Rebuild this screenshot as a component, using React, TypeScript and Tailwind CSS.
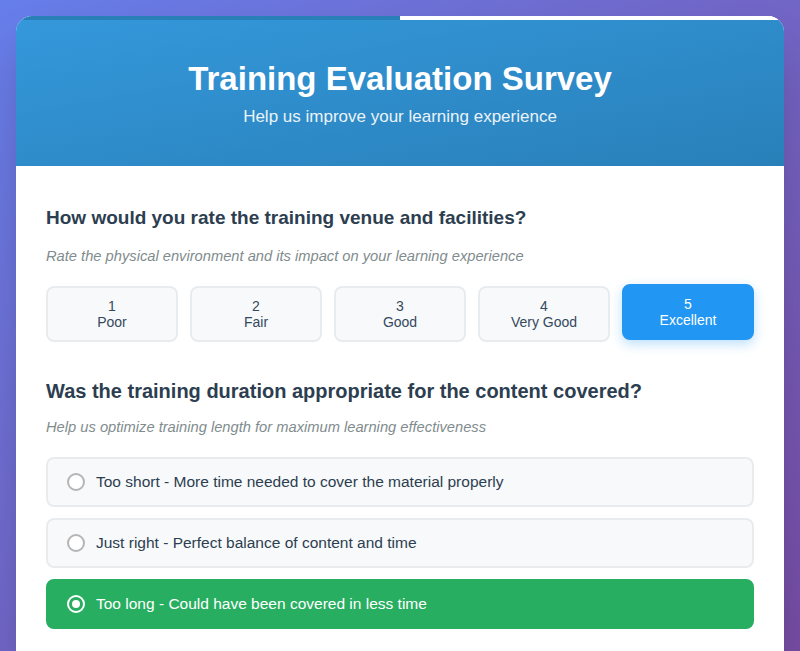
import { useState } from "react"

const ratings = [
  { value: 1, label: "Poor" },
  { value: 2, label: "Fair" },
  { value: 3, label: "Good" },
  { value: 4, label: "Very Good" },
  { value: 5, label: "Excellent" },
]

const durations = [
  "Too short - More time needed to cover the material properly",
  "Just right - Perfect balance of content and time",
  "Too long - Could have been covered in less time",
]

export default function App() {
  const [rating, setRating] = useState(5)
  const [duration, setDuration] = useState(2)

  return (
    <div className="min-h-screen bg-gradient-to-br from-[#667eea] to-[#764ba2] p-4 font-['Liberation_Sans',Arial,sans-serif]">
      <div className="mx-auto max-w-[768px] overflow-hidden rounded-2xl bg-white shadow-2xl">
        {/* progress */}
        <div className="h-1 bg-white">
          <div className="h-full w-1/2 bg-[#2980b9]" />
        </div>

        <div className="bg-gradient-to-br from-[#3498db] to-[#2980b9] px-10 pt-10 pb-10 text-center text-white">
          <h1 className="text-[33px] font-bold leading-[38px]">Training Evaluation Survey</h1>
          <p className="mt-2.5 text-[17px] leading-[18px] opacity-90">Help us improve your learning experience</p>
        </div>

        <div className="px-[30px] pt-10 pb-10">
          <div className="mb-[37px]">
            <h2 className="text-[19px] font-bold leading-[24px] text-[#2c3e50]">
              How would you rate the training venue and facilities?
            </h2>
            <p className="mt-[17px] text-[14.7px] italic leading-[18px] text-[#7f8c8d]">
              Rate the physical environment and its impact on your learning experience
            </p>
            <div className="mt-[21px] grid grid-cols-5 gap-3">
              {ratings.map((r) => {
                const active = rating === r.value
                return (
                  <button
                    key={r.value}
                    onClick={() => setRating(r.value)}
                    className={
                      active
                        ? "-translate-y-0.5 rounded-lg border-2 border-[#2196f3] bg-[#2196f3] px-2 py-2.5 text-sm leading-4 text-white shadow-[0_4px_12px_rgba(33,150,243,0.3)]"
                        : "rounded-lg border-2 border-[#e9ecef] bg-[#f8f9fa] px-2 py-2.5 text-sm leading-4 text-[#34495e]"
                    }
                  >
                    <div>{r.value}</div>
                    <div>{r.label}</div>
                  </button>
                )
              })}
            </div>
          </div>

          <div>
            <h2 className="text-[20px] font-bold leading-[24px] text-[#2c3e50]">
              Was the training duration appropriate for the content covered?
            </h2>
            <p className="mt-[15px] text-[14.7px] italic leading-[18px] text-[#7f8c8d]">
              Help us optimize training length for maximum learning effectiveness
            </p>
            <div className="mt-[21px] flex flex-col gap-[11px]">
              {durations.map((d, i) => {
                const active = duration === i
                return (
                  <label
                    key={i}
                    onClick={() => setDuration(i)}
                    className={
                      active
                        ? "flex h-[50px] cursor-pointer items-center gap-[11px] rounded-lg border-2 border-[#27ae60] bg-[#27ae60] px-[19px] text-[15.5px] text-white"
                        : "flex h-[50px] cursor-pointer items-center gap-[11px] rounded-lg border-2 border-[#e9ecef] bg-[#f8f9fa] px-[19px] text-[15.5px] text-[#2c3e50]"
                    }
                  >
                    {active ? (
                      <span className="flex h-[18px] w-[18px] items-center justify-center rounded-full border-2 border-white">
                        <span className="h-2 w-2 rounded-full bg-white" />
                      </span>
                    ) : (
                      <span className="h-[18px] w-[18px] rounded-full border-2 border-[#b5b5b5] bg-white" />
                    )}
                    {d}
                  </label>
                )
              })}
            </div>
          </div>
        </div>
      </div>
    </div>
  )
}
